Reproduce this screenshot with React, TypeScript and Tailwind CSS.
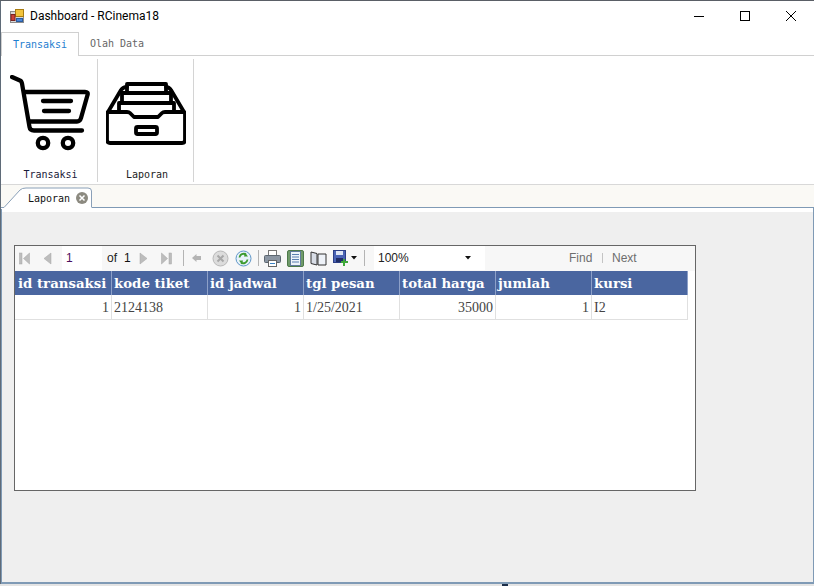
import React from "react";

const cols = [
  { h: "id transaksi", v: "1", r: true, w: "w-[97px] pl-[3px]" },
  { h: "kode tiket", v: "2124138", r: false, w: "w-[96px] pl-[2px]" },
  { h: "id jadwal", v: "1", r: true, w: "w-[96px] pl-[2px]" },
  { h: "tgl pesan", v: "1/25/2021", r: false, w: "w-[96px] pl-[2px]" },
  { h: "total harga", v: "35000", r: true, w: "w-[96px] pl-[2px]" },
  { h: "jumlah", v: "1", r: true, w: "w-[96px] pl-[2px]" },
  { h: "kursi", v: "I2", r: false, w: "w-[96px] pl-[2px]" },
];

function AppIcon() {
  return (
    <svg width="14" height="14" viewBox="0 0 14 14" className="shrink-0">
      <rect x="0.5" y="2.5" width="13" height="11" fill="#d9d9d9" stroke="#8c8c8c" />
      <rect x="5.5" y="0.5" width="8" height="7" fill="#f2c43d" stroke="#a87c12" />
      <rect x="1" y="5.5" width="4" height="6" fill="#c9403a" stroke="#7a2320" />
      <rect x="6.5" y="9.5" width="6" height="3" fill="#4a86d8" stroke="#2b5c9e" />
    </svg>
  );
}

function Cart() {
  return (
    <svg width="80" height="76" viewBox="0 0 80 76" fill="none" stroke="#000" strokeWidth="4.3" strokeLinecap="round" strokeLinejoin="round">
      <path d="M2 2 L10 5.5 Q11.5 6 12 8.5 L19.5 52 Q20 55.5 24 55.5 H72" />
      <path d="M14.5 17 H75 Q78.5 17 77.5 20 L71 43 Q70 46.5 67 46.5 H20" />
      <path d="M33 26 H61 M34 36 H59" />
      <circle cx="33" cy="68" r="5.2" />
      <circle cx="58" cy="68" r="5.2" />
    </svg>
  );
}

function Drawer() {
  return (
    <svg width="80" height="64" viewBox="0 0 80 64" fill="none" stroke="#000" strokeWidth="3.8" strokeLinecap="round" strokeLinejoin="round">
      <path d="M2 31 L15 9 Q17 6 21 6 M60 6 Q63 6 65 9 L78 31" />
      <path d="M21 3 H60 V12 H21 Z" />
      <path d="M16 22 V12 H65 V22" />
      <path d="M13 31 V22 H68 V31" />
      <path d="M3 31 H21 Q23 31 24 32 L28 36 H52 L56 32 Q57 31 59 31 H77 Q79 31 79 33 V59 Q79 62 76 62 H4 Q1 62 1 59 V33 Q1 31 3 31 Z" />
      <rect x="30" y="46" width="21" height="7" rx="1.5" />
    </svg>
  );
}

function Nav({ bar, flip = false }: { bar: boolean; flip?: boolean }) {
  return (
    <svg width={bar ? 11 : 10} height="13" viewBox={bar ? "0 0 11 13" : "0 0 10 13"} className={flip ? "-scale-x-100" : ""}>
      {bar && <rect x="0.5" y="1" width="2.5" height="11" fill="#bdbdbd" stroke="#a6a6a6" strokeWidth="0.5" />}
      <path d={bar ? "M10.5 1 V12 L4.5 6.5 Z" : "M9 1 V12 L2 6.5 Z"} fill="#bdbdbd" stroke="#a6a6a6" strokeWidth="0.5" />
    </svg>
  );
}

function Toolbar() {
  return (
    <div className="h-[25px] flex items-center bg-[#f7f7f7] text-[12px] text-[#222] pb-[1px]">
      <div className="ml-[4px] flex"><Nav bar /></div>
      <div className="ml-[12px] flex"><Nav bar={false} /></div>
      <div className="ml-[10px] w-[40px] h-[24px] bg-white flex items-center pl-[4px] text-[#4b0f5e]">1</div>
      <span className="ml-[5px] w-[17px]">of</span>
      <span className="w-[7px] text-[#111]">1</span>
      <div className="ml-[8px] flex"><Nav bar={false} flip /></div>
      <div className="ml-[12px] flex"><Nav bar flip /></div>
      <div className="w-px h-[16px] bg-[#b4b4b4] ml-[11px]" />
      <svg width="11" height="10" viewBox="0 0 11 10" className="ml-[7px]">
        <path d="M5.5 1 L1 5 L5.5 9 V7 H10 V3 H5.5 Z" fill="#b4b4b4" />
      </svg>
      <svg width="17" height="17" viewBox="0 0 17 17" className="ml-[10px]">
        <circle cx="8.5" cy="8.5" r="7.5" fill="#dcdcdc" stroke="#b8b8b8" />
        <path d="M5.5 5.5 L11.5 11.5 M11.5 5.5 L5.5 11.5" stroke="#a8a8a8" strokeWidth="2" />
      </svg>
      <svg width="17" height="17" viewBox="0 0 17 17" className="ml-[6px]">
        <circle cx="8.5" cy="8.5" r="7.5" fill="#e8f2fb" stroke="#5f96c8" />
        <path d="M4.5 7.5 A4.2 4.2 0 0 1 11 4.5 M12.5 9.5 A4.2 4.2 0 0 1 6 12.5" fill="none" stroke="#3c9a2e" strokeWidth="1.8" />
        <path d="M10 2.5 L13 6.5 L9 6.5 Z M7 14.5 L4 10.5 L8 10.5 Z" fill="#3c9a2e" />
      </svg>
      <div className="w-px h-[16px] bg-[#b4b4b4] ml-[6px]" />
      <svg width="17" height="17" viewBox="0 0 17 17" className="ml-[5px]">
        <rect x="4.5" y="0.5" width="8" height="6" fill="#fff" stroke="#777" />
        <rect x="0.5" y="5.5" width="16" height="7" rx="1" fill="#8b96a3" stroke="#5c6670" />
        <rect x="4.5" y="10.5" width="8" height="6" fill="#fff" stroke="#666" />
        <rect x="6" y="13" width="5" height="1" fill="#3b82c4" />
      </svg>
      <svg width="17" height="17" viewBox="0 0 17 17" className="ml-[6px]">
        <rect x="0.5" y="0.5" width="16" height="16" rx="1.5" fill="#6f9a6a" stroke="#4e7a4a" />
        <rect x="3.5" y="1.5" width="10" height="14" fill="#eef3fa" stroke="#607a9c" />
        <path d="M5 4.5 H12 M5 7 H12 M5 9.5 H12 M5 12 H12" stroke="#5a7fb0" />
      </svg>
      <svg width="17" height="15" viewBox="0 0 17 15" className="ml-[6px]">
        <path d="M1 1 L7 2.5 V14 L1 12.5 Z" fill="#d8dde6" stroke="#333" />
        <path d="M8 3 H16 V14 H8 Z" fill="#eef2f8" stroke="#333" />
      </svg>
      <svg width="16" height="17" viewBox="0 0 16 17" className="ml-[6px]">
        <rect x="0.5" y="0.5" width="12" height="12" fill="#4a63b5" stroke="#2d3f86" />
        <rect x="3" y="1" width="7" height="4" fill="#dfe6f5" />
        <rect x="3" y="8" width="7" height="4" fill="#1f2d66" />
        <path d="M10 9 H12 V11 H15 V13 H12 V16 H10 V13 H8 V11 H10 Z" fill="#3fa83a" />
      </svg>
      <svg width="6" height="4" viewBox="0 0 6 4" className="ml-[2px]"><path d="M0 0 H6 L3 3.5 Z" fill="#111" /></svg>
      <div className="w-px h-[16px] bg-[#b4b4b4] ml-[7px]" />
      <div className="w-[111px] h-[24px] bg-white ml-[9px] flex items-center pl-[4px] text-[12px] relative">
        100%
        <svg width="6" height="4" viewBox="0 0 6 4" className="absolute left-[91px] top-[10px]"><path d="M0 0 H6 L3 3.5 Z" fill="#111" /></svg>
      </div>
      <span className="ml-[84px] w-[23px] text-[#6e6e6e]">Find</span>
      <div className="w-px h-[10px] bg-[#c4c4c4] ml-[10px]" />
      <span className="ml-[9px] text-[#6e6e6e]">Next</span>
    </div>
  );
}

export default function App() {
  return (
    <div className="w-[814px] h-[586px] overflow-hidden bg-[#5f6b78] font-['Liberation_Sans',sans-serif] flex flex-col">
      <div className="h-px bg-[#5a5f66]" />
      <div className="h-[583px] flex flex-col bg-white ml-px">
        <div className="h-[31px] flex items-center pl-[9px] pb-[2px] bg-white">
          <AppIcon />
          <span className="ml-[6px] text-[12px] font-['Roboto',sans-serif] text-black">Dashboard - RCinema18</span>
          <div className="ml-auto flex items-center">
            <svg width="46" height="30" viewBox="0 0 46 30"><path d="M18 15.5 H28" stroke="#000" /></svg>
            <svg width="46" height="30" viewBox="0 0 46 30"><rect x="18.5" y="10.5" width="9" height="9" fill="none" stroke="#000" /></svg>
            <svg width="46" height="30" viewBox="0 0 46 30"><path d="M18 10 L28 20 M28 10 L18 20" stroke="#000" /></svg>
          </div>
        </div>
        <div className="h-[24px] flex border-b border-[#d0d0d0] font-['DejaVu_Sans_Mono',monospace] text-[10px]">
          <div className="w-[78px] h-[24px] bg-white border border-b-0 border-[#d0d0d0] flex items-center justify-center text-[#1f80d0]">Transaksi</div>
          <div className="w-[76px] flex items-center justify-center text-[#666]">Olah Data</div>
        </div>
        <div className="h-[128px] flex bg-white font-['DejaVu_Sans_Mono',monospace] text-[10px] text-[#222]">
          <div className="w-[97px] h-[123px] mt-[3px] border-r border-[#d4d4d4] flex flex-col items-center">
            <div className="h-[104px] w-full pl-[9px] pt-[16px]"><Cart /></div>
            <span className="mt-[6px] ml-[3px] text-[#1a1a3a]">Transaksi</span>
          </div>
          <div className="w-[96px] h-[123px] mt-[3px] border-r border-[#d4d4d4] flex flex-col items-center">
            <div className="h-[104px] w-full pl-[8px] pt-[22px]"><Drawer /></div>
            <span className="mt-[6px] ml-[3px]">Laporan</span>
          </div>
        </div>
        <div className="h-[23px] bg-[#faf9f5] border-t border-[#d8d8d8] flex items-end relative z-10">
          <svg width="94" height="24" viewBox="0 0 94 24" className="absolute left-0 top-0">
            <path d="M0 24 V22 H3 L19 5 Q21 3 25 3 H87 Q90.5 3 90.5 6 V24 Z" fill="#fff" />
            <path d="M0 22.5 H3 L19 5 Q21 3 25 3 H87 Q90.5 3 90.5 6 V22" fill="none" stroke="#8aa0b8" />
          </svg>
          <div className="relative h-[22px] pt-[4px] ml-[27px] flex items-center font-['DejaVu_Sans_Mono',monospace] text-[10px] font-medium text-[#111]">
            Laporan
            <div className="ml-[6px] w-[12px] h-[12px] rounded-full bg-[#8c8a80] flex items-center justify-center">
              <svg width="8" height="8" viewBox="0 0 8 8"><path d="M1.5 1.5 L6.5 6.5 M6.5 1.5 L1.5 6.5" stroke="#fff" strokeWidth="1.5" /></svg>
            </div>
          </div>
        </div>
        <div className="flex-1 border-t border-r border-l border-b-2 border-[#7f9ab5] bg-white flex flex-col">
          <div className="h-[4px] bg-white" />
          <div className="flex-1 bg-[#efefef] pt-[33px] pl-[12px]">
            <div className="w-[682px] h-[246px] border border-[#666666] bg-white">
              <Toolbar />
              <div className="font-['DejaVu_Serif',serif] w-[673px]">
                <div className="flex bg-[#4a66a0] text-white text-[13.3px] font-bold h-[24px]">
                  {cols.map((c) => (
                    <div key={c.h} className={`${c.w} border-r border-[#8da0c8] flex items-center pt-[2px] whitespace-nowrap`}>{c.h}</div>
                  ))}
                </div>
                <div className="flex font-['Liberation_Serif',serif] text-[14px] text-[#444] h-[25px] border-b border-[#e0e0e0]">
                  {cols.map((c) => (
                    <div key={c.h} className={`${c.w} flex items-center border-r border-[#e0e0e0] ${c.r ? "justify-end pr-[2px]" : ""}`}>{c.v}</div>
                  ))}
                </div>
              </div>
            </div>
          </div>
        </div>
      </div>
      <div className="h-[2px] bg-[#e4e4e4] flex">
        <div className="ml-[502px] w-[6px] bg-[#1c2e4a]" />
      </div>
    </div>
  );
}
